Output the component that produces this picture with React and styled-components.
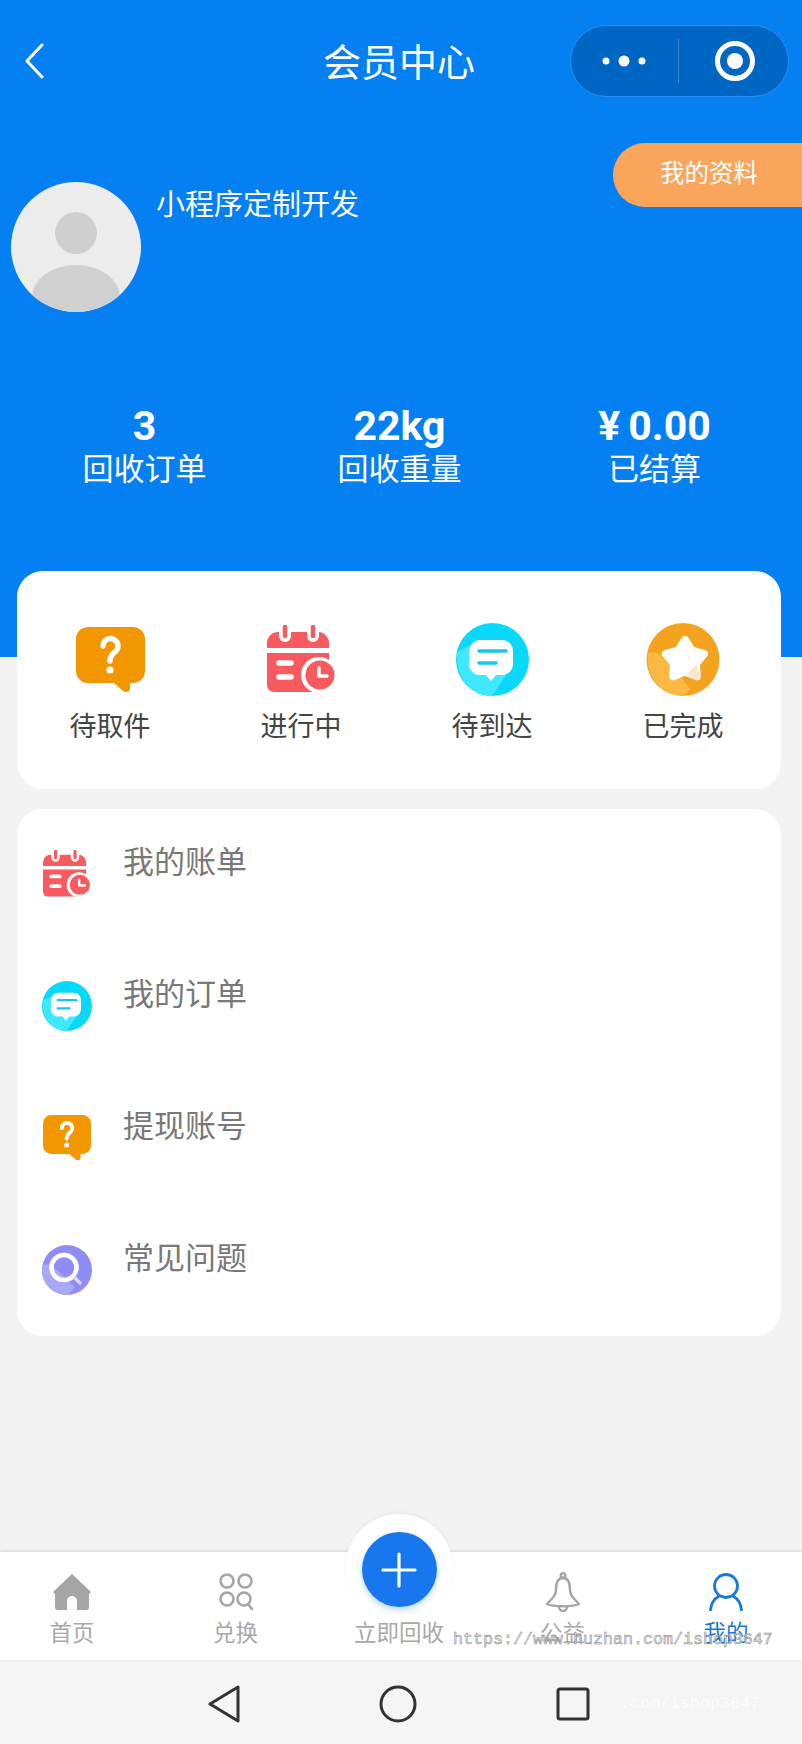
import React from "react";
import styled, { createGlobalStyle } from "styled-components";

const Global = createGlobalStyle`
  html, body { margin: 0; padding: 0; background: #f3f3f3; }
  * { box-sizing: border-box; }
  body { font-family: "Noto Sans CJK SC", "Noto Sans", sans-serif; }
`;

const Page = styled.div`
  position: relative;
  width: 802px;
  height: 1744px;
  overflow: hidden;
  display: flex;
  flex-direction: column;
  background: #f3f3f3;
`;
const Hero = styled.header`
  height: 657px;
  flex: none;
  background: #0580f3;
  color: #fff;
  display: flex;
  flex-direction: column;
`;
const NavBar = styled.div`
  height: 72px;
  margin-top: 25px;
  padding-right: 13px;
  padding-left: 24px;
  display: grid;
  grid-template-columns: 299px auto 1fr;
  align-items: center;
`;
const Title = styled.h1`
  margin: -2px 0 0;
  font-size: 38px;
  line-height: 70px;
  font-weight: 400;
`;
const Capsule = styled.div`
  justify-self: end;
  width: 219px;
  height: 72px;
  border-radius: 36px;
  background: #0066c4;
  border: 1px solid #2b8def;
  display: flex;
  align-items: center;
`;
const CapsuleCell = styled.div`
  flex: 1;
  height: 44px;
  display: flex;
  align-items: center;
  justify-content: center;
  padding-left: ${(p) => (p.$divider ? "3px" : "0")};
  border-left: ${(p) => (p.$divider ? "1px solid rgba(255,255,255,.22)" : "none")};
`;
const ProfileRow = styled.div`
  display: flex;
  align-items: flex-start;
  padding-left: 11px;
  margin-top: 46px;
`;
const Avatar = styled.svg`
  width: 130px;
  height: 130px;
  margin-top: 39px;
  flex: none;
`;
const Name = styled.div`
  margin: 37px 0 0 15px;
  font-size: 29px;
  line-height: 44px;
`;
const ProfileButton = styled.div`
  margin-left: auto;
  width: 189px;
  height: 64px;
  border-radius: 32px 0 0 32px;
  background: #f9a55c;
  font-size: 24.5px;
  line-height: 58px;
  padding-left: 47px;
`;
const Stats = styled.div`
  display: flex;
  margin-top: 94px;
  padding-left: 17px;
`;
const Stat = styled.div`
  width: 255px;
  text-align: center;
`;
const StatValue = styled.div`
  font-family: "Roboto", "Noto Sans", sans-serif;
  font-size: 41px;
  line-height: 40px;
  font-weight: 700;
  word-spacing: -2px;
`;
const StatLabel = styled.div`
  font-size: 31px;
  line-height: 42px;
`;
const Card = styled.section`
  margin: 0 21px 0 17px;
  background: #fff;
  border-radius: 26px;
`;
const ActionCard = styled(Card)`
  margin-top: -86px;
  height: 218px;
  display: flex;
  gap: 5px;
  padding-top: 50px;
  position: relative;
`;
const Action = styled.div`
  width: 186px;
  flex: none;
  display: flex;
  flex-direction: column;
  align-items: center;
  color: #444;
`;
const ActionIcon = styled.div`
  height: 76px;
  display: flex;
  align-items: center;
  justify-content: center;
`;
const ActionLabel = styled.div`
  font-size: 27px;
  line-height: 40px;
  margin-top: 8px;
`;
const ListCard = styled(Card)`
  margin-top: 20px;
  padding: 31px 0 22px 25px;
  display: flex;
  flex-direction: column;
  gap: 54px;
`;
const Row = styled.div`
  height: 78px;
  display: flex;
  align-items: flex-start;
  gap: 31px;
`;
const RowIcon = styled.div`
  width: 50px;
  height: 50px;
  margin-top: 9px;
  display: flex;
  align-items: center;
  justify-content: center;
`;
const RowLabel = styled.div`
  font-size: 31px;
  line-height: 40px;
  color: #787878;
`;
const TabBar = styled.nav`
  margin-top: auto;
  height: 108px;
  flex: none;
  background: #fff;
  box-shadow: 0 -1px 3px rgba(0, 0, 0, 0.12);
  display: flex;
  justify-content: space-between;
  padding-right: 4px;
  position: relative;
`;
const Tab = styled.div`
  width: 144px;
  display: flex;
  flex-direction: column;
  align-items: center;
  color: ${(p) => (p.$active ? "#1a78d6" : "#a8a8a8")};
`;
const TabIcon = styled.div`
  height: 40px;
  margin-top: 20px;
  display: flex;
  align-items: center;
  justify-content: center;
`;
const TabLabel = styled.div`
  font-size: 22.5px;
  line-height: 32px;
  margin-top: 3px;
`;
const FabTab = styled(Tab)`
  position: relative;
  justify-content: flex-end;
  padding-bottom: 13px;
`;
const FabHalo = styled.div`
  position: absolute;
  left: 18px;
  top: -38px;
  width: 108px;
  height: 108px;
  border-radius: 50%;
  background: #fff;
  box-shadow: 0 -2px 3px rgba(0, 0, 0, 0.04);
  display: flex;
  align-items: flex-start;
  justify-content: center;
  padding-top: 18px;
`;
const Fab = styled.div`
  width: 75px;
  height: 75px;
  border-radius: 50%;
  background: #1677ee;
  box-shadow: 0 3px 6px rgba(22, 119, 238, 0.3);
  display: flex;
  align-items: center;
  justify-content: center;
`;
const SystemBar = styled.div`
  height: 84px;
  flex: none;
  background: #f5f5f5;
  display: flex;
  align-items: center;
  gap: 139px;
  padding-left: 208px;
  padding-top: 4px;
`;
const Watermark = styled.div`
  position: absolute;
  left: 453px;
  top: 1629px;
  font-family: "Liberation Mono", monospace;
  font-size: 16.67px;
  line-height: 22px;
  color: rgba(225, 225, 225, 0.85);
  -webkit-text-stroke: 0.5px #858585;
  white-space: nowrap;
`;
const GhostMark = styled(Watermark)`
  left: 620px;
  top: 1693px;
  color: rgba(255, 255, 255, 0.75);
  -webkit-text-stroke: 0;
`;

const QuestionIcon = ({ w }) => (
  <svg width={w} viewBox="0 0 69 65">
    <path fill="#f29700" d="M12 0H57a12 12 0 0 1 12 12V44a12 12 0 0 1-12 12H54V61q0 4-4 4-2 0-3-1L38 56H12A12 12 0 0 1 0 44V12A12 12 0 0 1 12 0Z" />
    <path fill="none" stroke="#fff" strokeWidth="5.400" strokeLinecap="round" d="M27 19a7.500 7.500 0 1 1 12 6c-3 2.500-5 4-5 9" />
    <circle cx="34" cy="43" r="3.600" fill="#fff" />
  </svg>
);
const CalendarIcon = ({ w }) => (
  <svg width={w} viewBox="0 0 69 68">
    <path fill="#f95a60" d="M11 7H51a11 11 0 0 1 11 11V23H0V18a11 11 0 0 1 11-11Z" />
    <path fill="#f95a60" d="M0 28H62V60a7 7 0 0 1-7 7H7a7 7 0 0 1-7-7Z" />
    <path stroke="#fff" strokeWidth="12" strokeLinecap="round" d="M18 2V11M46 2V11" />
    <path stroke="#f95a60" strokeWidth="4.500" strokeLinecap="round" d="M18 2V11M46 2V11" />
    <path stroke="#fff" strokeWidth="5.500" strokeLinecap="round" d="M12 38H24M12 52H24" />
    <circle cx="52" cy="50" r="18" fill="#fff" />
    <circle cx="53" cy="50" r="14.500" fill="#f95a60" />
    <path fill="none" stroke="#fff" strokeWidth="3.400" strokeLinecap="round" strokeLinejoin="round" d="M52 43V51H60" />
  </svg>
);
const ChatIcon = ({ w }) => (
  <svg width={w} viewBox="0 0 73 73">
    <circle cx="36.500" cy="36.500" r="36.500" fill="#08d9fb" />
    <path fill="#3ee8fd" d="M1 29C8 24 16 22 24 26L50 52 36 73C30 73 25 72 20 69 8 62 0 48 1 29Z" />
    <path fill="#fff" d="M24 17H46a11 11 0 0 1 11 11V41a11 11 0 0 1-11 11H40L35 58 30 52H24a11 11 0 0 1-11-11V28a11 11 0 0 1 11-11Z" />
    <path stroke="#17c6ea" strokeWidth="3.400" strokeLinecap="round" d="M23 28H50M23 40H40" />
  </svg>
);
const StarIcon = ({ w }) => (
  <svg width={w} viewBox="0 0 74 73">
    <circle cx="37" cy="36.500" r="36.500" fill="#f5a31f" />
    <path fill="#fbb943" d="M2 30C8 28 14 30 20 35L44 66 38 73C32 73 26 72 20 68 6 60 0 45 2 30Z" />
    <path fill="#fff" stroke="#fff" strokeWidth="8" strokeLinejoin="round" d="M39 17L45.800 27.700 58 30.800 49.900 40.600 50.800 53.200 39 48.500 27.200 53.200 28.100 40.600 20 30.800 32.200 27.700Z" />
    <path fill="#fce8cc" d="M41 51L51 41 54 54Q53 57 49 56Z" />
  </svg>
);
const SearchIcon = ({ w }) => (
  <svg width={w} viewBox="0 0 50 50">
    <circle cx="25" cy="25" r="25" fill="#8f8df5" />
    <path fill="#a9a7f8" d="M1 20C6 18 10 20 14 24L33 42 26 50C12 50 0 40 0 25Z" />
    <circle cx="22" cy="22.500" r="12.500" fill="none" stroke="#fff" strokeWidth="4.600" />
    <path stroke="#d6d6fc" strokeWidth="3.600" strokeLinecap="round" d="M33 33L38 38" />
  </svg>
);

const actions = [
  { label: "待取件", Icon: QuestionIcon, w: 69 },
  { label: "进行中", Icon: CalendarIcon, w: 69 },
  { label: "待到达", Icon: ChatIcon, w: 73 },
  { label: "已完成", Icon: StarIcon, w: 74 },
];
const rows = [
  { label: "我的账单", Icon: CalendarIcon, w: 48 },
  { label: "我的订单", Icon: ChatIcon, w: 50 },
  { label: "提现账号", Icon: QuestionIcon, w: 48 },
  { label: "常见问题", Icon: SearchIcon, w: 50 },
];
const stats = [
  ["3", "回收订单"],
  ["22kg", "回收重量"],
  ["¥ 0.00", "已结算"],
];

export default function App() {
  return (
    <Page>
      <Global />
      <Hero>
        <NavBar>
          <svg width="20" height="36" viewBox="0 0 20 36" fill="none" stroke="#fff" strokeWidth="3" strokeLinecap="round" strokeLinejoin="round">
            <path d="M18 2L3 18 18 34" />
          </svg>
          <Title>会员中心</Title>
          <Capsule>
            <CapsuleCell>
              <svg width="44" height="12" viewBox="0 0 44 12" fill="#fff">
                <circle cx="4" cy="6" r="3.500" />
                <circle cx="22" cy="6" r="5.500" />
                <circle cx="40" cy="6" r="3.500" />
              </svg>
            </CapsuleCell>
            <CapsuleCell $divider>
              <svg width="42" height="42" viewBox="0 0 42 42">
                <circle cx="21" cy="21" r="17.500" fill="none" stroke="#fff" strokeWidth="5" />
                <circle cx="21" cy="21" r="8" fill="#fff" />
              </svg>
            </CapsuleCell>
          </Capsule>
        </NavBar>
        <ProfileRow>
          <Avatar viewBox="0 0 130 130">
            <defs>
              <clipPath id="avatar-clip">
                <circle cx="65" cy="65" r="65" />
              </clipPath>
            </defs>
            <circle cx="65" cy="65" r="65" fill="#ececec" />
            <ellipse cx="65" cy="51" rx="21" ry="21" fill="#cfcfcf" />
            <ellipse cx="65" cy="115" rx="44" ry="32" fill="#d0d0d0" clipPath="url(#avatar-clip)" />
          </Avatar>
          <Name>小程序定制开发</Name>
          <ProfileButton>我的资料</ProfileButton>
        </ProfileRow>
        <Stats>
          {stats.map(([value, label]) => (
            <Stat key={label}>
              <StatValue>{value}</StatValue>
              <StatLabel>{label}</StatLabel>
            </Stat>
          ))}
        </Stats>
      </Hero>
      <ActionCard>
        {actions.map(({ label, Icon, w }) => (
          <Action key={label}>
            <ActionIcon>
              <Icon w={w} />
            </ActionIcon>
            <ActionLabel>{label}</ActionLabel>
          </Action>
        ))}
      </ActionCard>
      <ListCard>
        {rows.map(({ label, Icon, w }) => (
          <Row key={label}>
            <RowIcon>
              <Icon w={w} />
            </RowIcon>
            <RowLabel>{label}</RowLabel>
          </Row>
        ))}
      </ListCard>
      <TabBar>
        <Tab>
          <TabIcon>
            <svg width="38" height="36" viewBox="0 0 38 36" fill="#a5a5a5">
              <path d="M19 0L38 18 36 20V33a3 3 0 0 1-3 3H24V27a5 5 0 0 0-10 0V36H5a3 3 0 0 1-3-3V20L0 18Z" />
            </svg>
          </TabIcon>
          <TabLabel>首页</TabLabel>
        </Tab>
        <Tab>
          <TabIcon>
            <svg width="34" height="38" viewBox="0 0 34 38" fill="none" stroke="#a5a5a5" strokeWidth="2.600" strokeLinecap="round">
              <circle cx="8" cy="8" r="6.500" />
              <circle cx="26" cy="8" r="6.500" />
              <circle cx="8" cy="26" r="6.500" />
              <circle cx="25" cy="26" r="6.500" />
              <path d="M29 31L33 36" />
            </svg>
          </TabIcon>
          <TabLabel>兑换</TabLabel>
        </Tab>
        <FabTab>
          <FabHalo>
            <Fab>
              <svg width="36" height="36" viewBox="0 0 36 36" stroke="#fff" strokeWidth="3.200" strokeLinecap="round">
                <path d="M18 2V34M2 18H34" />
              </svg>
            </Fab>
          </FabHalo>
          <TabLabel>立即回收</TabLabel>
        </FabTab>
        <Tab>
          <TabIcon>
            <svg width="36" height="40" viewBox="0 0 36 40" fill="none" stroke="#a5a5a5" strokeWidth="2.400" strokeLinejoin="round">
              <path d="M18 6C12 6 11 12 11 18 11 25 6 27 2 32 8 35 28 35 34 32 30 27 25 25 25 18 25 12 24 6 18 6Z" />
              <circle cx="18" cy="3.500" r="2.300" />
              <path d="M14 35a4 4 0 0 0 8 0" />
            </svg>
          </TabIcon>
          <TabLabel>公益</TabLabel>
        </Tab>
        <Tab $active>
          <TabIcon>
            <svg width="34" height="38" viewBox="0 0 34 38" fill="none" stroke="#1a78d6" strokeWidth="2.800" strokeLinecap="round">
              <circle cx="17" cy="13" r="11.500" />
              <path d="M10 23C5 26 2 31 1.500 37M24 23C29 26 32 31 32.500 37" />
            </svg>
          </TabIcon>
          <TabLabel>我的</TabLabel>
        </Tab>
      </TabBar>
      <SystemBar>
        <svg width="32" height="38" viewBox="0 0 32 38" fill="none" stroke="#333" strokeWidth="3" strokeLinejoin="round">
          <path d="M30 2V36L2 19Z" />
        </svg>
        <svg width="38" height="38" viewBox="0 0 38 38" fill="none" stroke="#333" strokeWidth="3">
          <circle cx="19" cy="19" r="17" />
        </svg>
        <svg width="34" height="34" viewBox="0 0 34 34" fill="none" stroke="#333" strokeWidth="3" strokeLinejoin="round">
          <rect x="2" y="2" width="30" height="30" rx="2" />
        </svg>
      </SystemBar>
      <Watermark>https://www.huzhan.com/ishop3647</Watermark>
      <GhostMark>.com/ishop3647</GhostMark>
    </Page>
  );
}
